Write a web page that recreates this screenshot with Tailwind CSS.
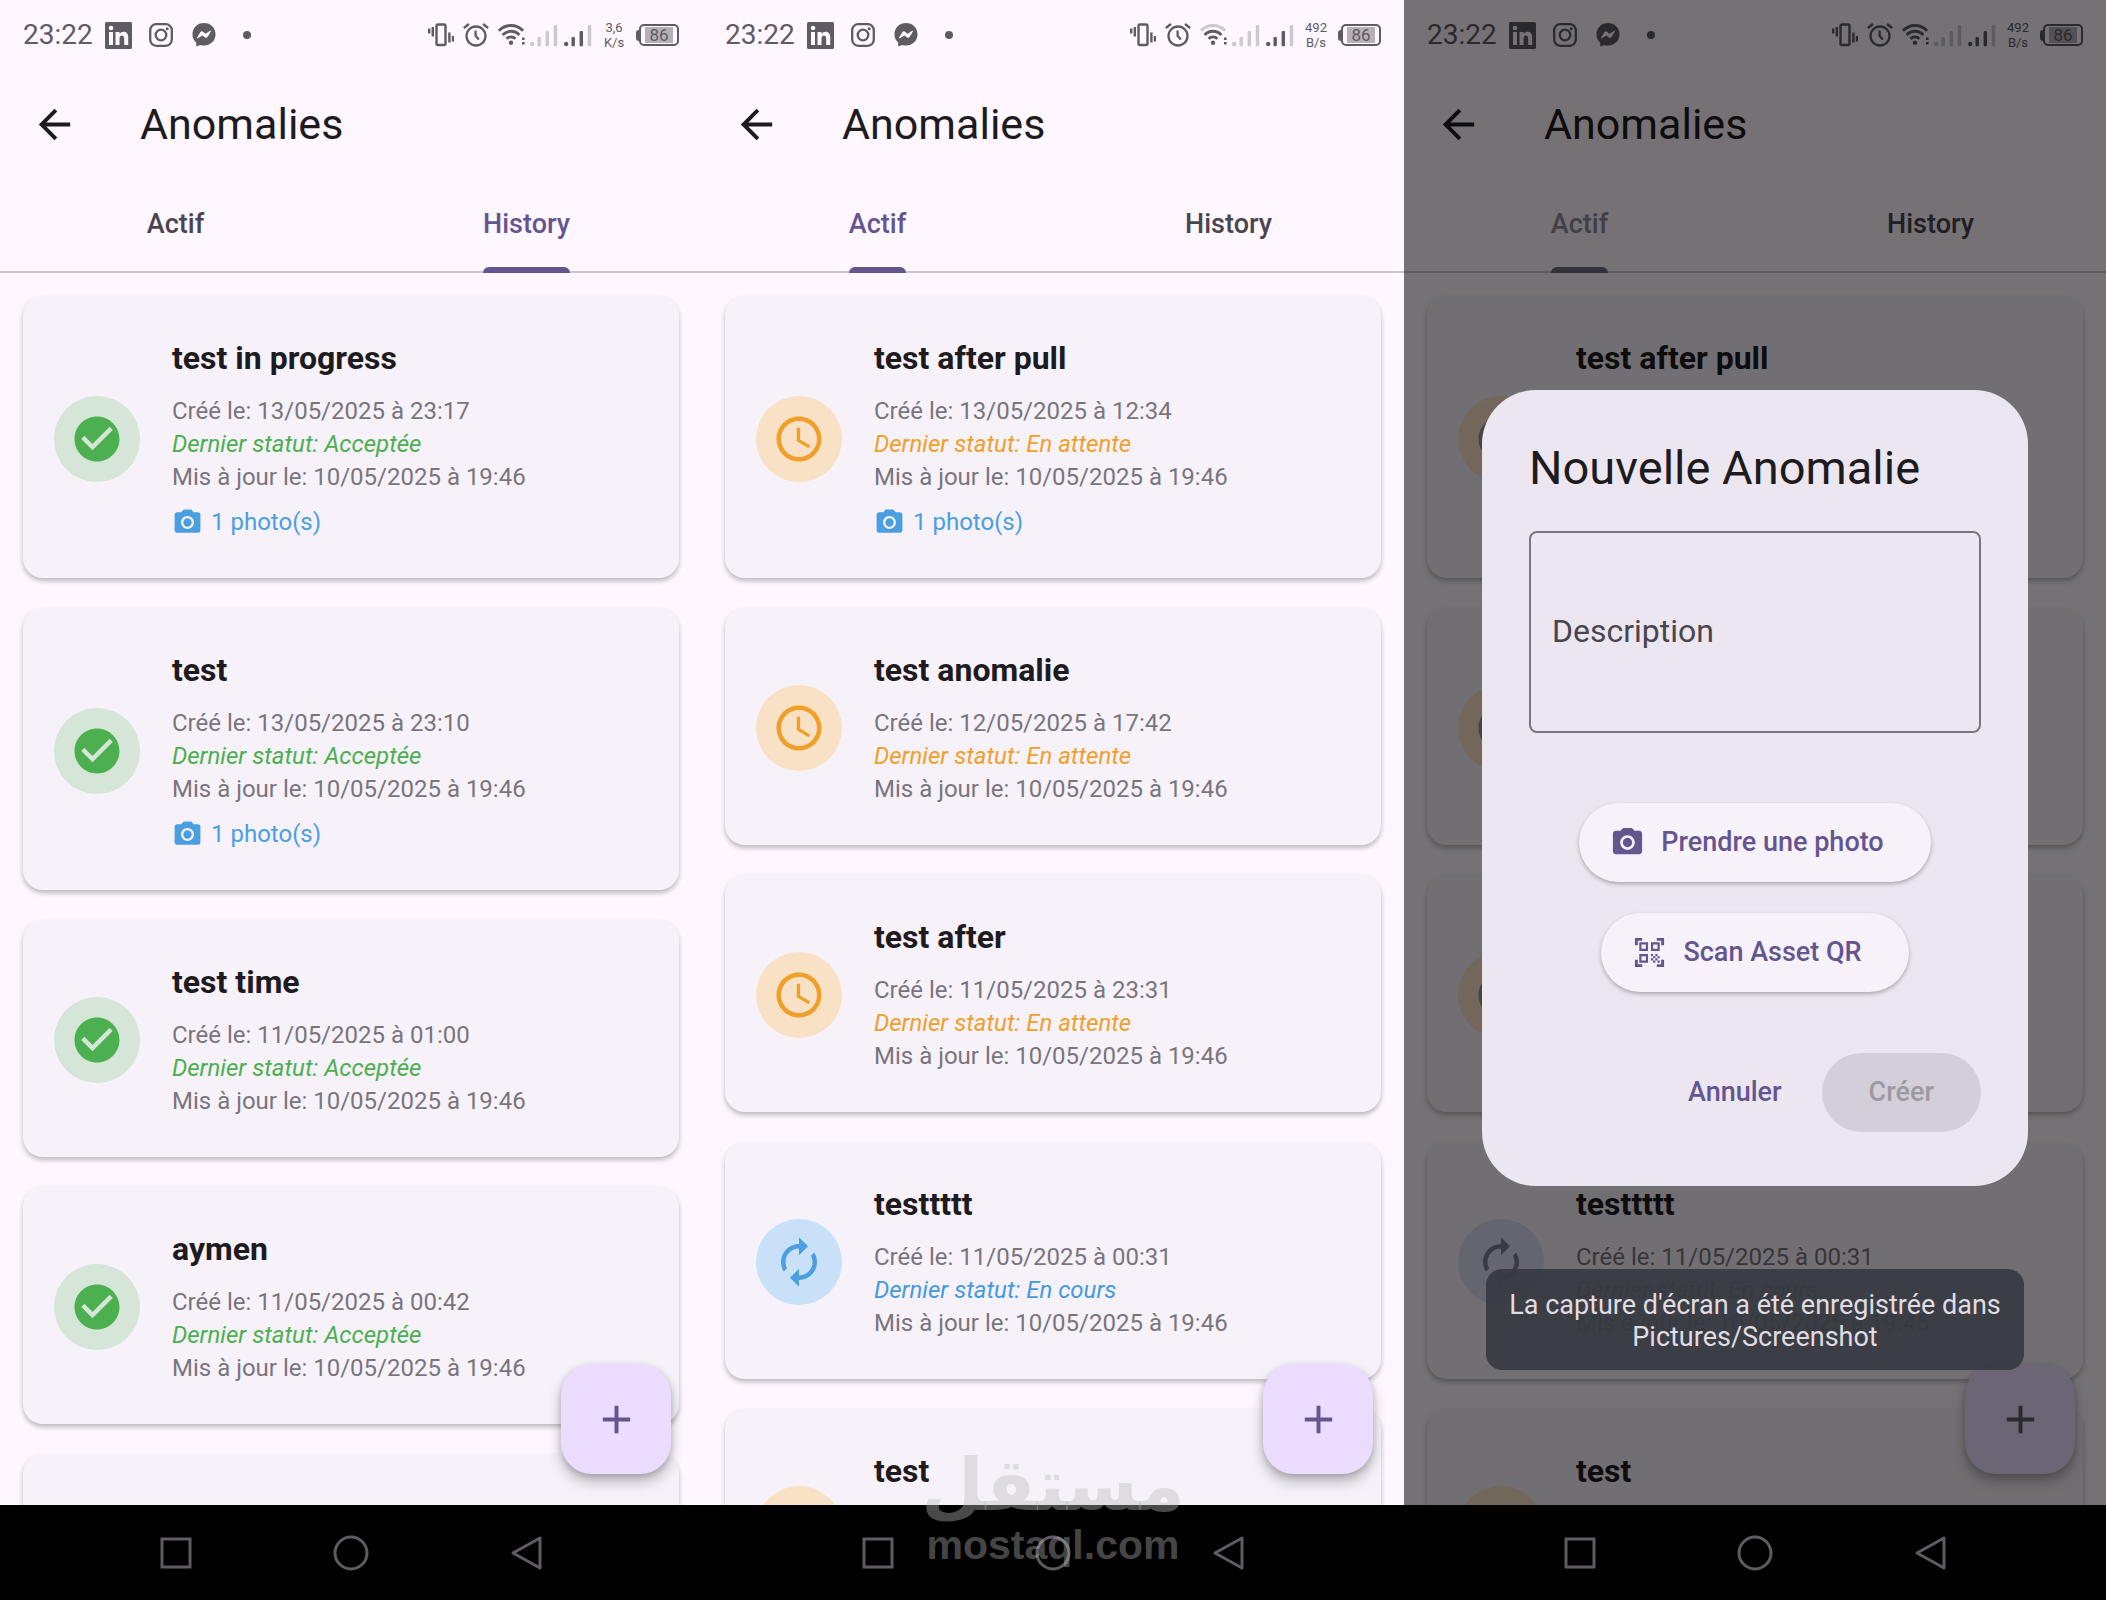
<!DOCTYPE html>
<html lang="fr">
<head>
<meta charset="utf-8">
<meta name="viewport" content="width=device-width, initial-scale=1">
<title>Anomalies</title>
<script src="https://cdn.jsdelivr.net/npm/@tailwindcss/browser@4"></script>
</head>
<body class="bg-black font-['Roboto','Noto_Sans',sans-serif] text-[#1d1b20]">

<svg class="hidden" aria-hidden="true">
  <symbol id="i-linkedin" viewBox="0 0 27 27"><path fill="currentColor" fill-rule="evenodd" d="M1.5 0h24A1.5 1.5 0 0 1 27 1.500v24a1.500 1.500 0 0 1-1.500 1.500h-24A1.500 1.500 0 0 1 0 25.500v-24A1.500 1.500 0 0 1 1.500 0zM4 10v13h4V10zM6 3.700a2.300 2.300 0 1 0 0 4.600 2.300 2.300 0 0 0 0-4.600zM10.500 10v13h4v-6.500c0-3.900 4.700-4.100 4.700 0V23h4v-8c0-6.600-6.500-6.300-8.700-3.200V10z"/></symbol>
  <symbol id="i-instagram" viewBox="0 0 24 24"><g fill="none" stroke="currentColor" stroke-width="2.300"><rect x="1.200" y="1.200" width="21.600" height="21.600" rx="6"/><circle cx="12" cy="12" r="5.300"/></g><circle cx="18.200" cy="5.800" r="1.500" fill="currentColor"/></symbol>
  <symbol id="i-messenger" viewBox="0 0 24 25"><path fill="currentColor" fill-rule="evenodd" d="M12 0C5.200 0 0 5 0 11.700c0 3.500 1.400 6.500 3.800 8.600L4 24.500l4-1.700c1.200.4 2.600.6 4 .6 6.800 0 12-5 12-11.700S18.800 0 12 0zM4.800 15.100l3.500-5.600c.6-.9 1.800-1.100 2.600-.5l2.800 2.100 4.700-3c.5-.4 1.200.2.800.8l-3.500 5.600c-.6.900-1.800 1.100-2.600.5l-2.800-2.100-4.700 3c-.5.400-1.200-.2-.8-.8z"/></symbol>
  <symbol id="i-vibrate" viewBox="0 0 26 24"><g fill="none" stroke="currentColor" stroke-width="2.400"><rect x="8.500" y="1.500" width="9" height="20.500" rx="1.500"/><path d="M1.200 5.500v5M4.800 4v9.500M21.400 9.500v10M25 13v5.500"/></g></symbol>
  <symbol id="i-alarm" viewBox="0 0 26 24"><g fill="none" stroke="currentColor" stroke-width="2.300"><circle cx="13" cy="13" r="9.500"/><path d="M.8 5 6 1M20 1l5.200 4M12.600 7.500v5.300l3.200 3.700"/></g></symbol>
  <symbol id="i-wifi" viewBox="0 0 28 24"><g fill="none" stroke="currentColor" stroke-width="2.800"><path d="M.9 7.800C7.500.7 18.500.7 25.100 7.800"/><path d="M4.600 12c4.800-5 12-5 16.800 0M8.500 15.800c2.700-2.500 6.300-2.500 9 0"/></g><circle cx="13" cy="19.700" r="2.200" fill="currentColor"/><path fill="currentColor" d="M24 14.500h2.600v2.600H24zM24 19h2.600v2.600H24z"/></symbol>
  <symbol id="i-wifi-low" viewBox="0 0 28 24"><g fill="none" stroke="currentColor" stroke-width="2.800"><path opacity=".3" d="M.9 7.800C7.500.7 18.500.7 25.100 7.800"/><path d="M4.600 12c4.800-5 12-5 16.800 0M8.500 15.800c2.700-2.500 6.300-2.500 9 0"/></g><circle cx="13" cy="19.700" r="2.200" fill="currentColor"/><path fill="currentColor" d="M24 14.500h2.600v2.600H24zM24 19h2.600v2.600H24z"/></symbol>
  <symbol id="i-signal-none" viewBox="0 0 28 24"><g fill="currentColor" opacity=".3"><circle cx="2.200" cy="21" r="2.200"/><rect x="7.500" y="14" width="3.400" height="9.200" rx="1"/><rect x="15.600" y="8" width="3.400" height="15.200" rx="1"/><rect x="23.800" y="2" width="3.400" height="21.200" rx="1"/></g></symbol>
  <symbol id="i-signal" viewBox="0 0 28 24"><g fill="currentColor"><circle cx="2.200" cy="21" r="2.200"/><rect x="7.500" y="14" width="3.400" height="9.200" rx="1"/><rect x="15.600" y="8" width="3.400" height="15.200" rx="1"/><rect x="23.800" y="2" width="3.400" height="21.200" rx="1" opacity=".3"/></g></symbol>
  <symbol id="i-back" viewBox="0 0 24 24"><path fill="currentColor" d="M20 11H7.830l5.590-5.590L12 4l-8 8 8 8 1.410-1.410L7.830 13H20v-2z"/></symbol>
  <symbol id="i-check" viewBox="0 0 24 24"><path fill="currentColor" d="M12 2C6.480 2 2 6.480 2 12s4.480 10 10 10 10-4.480 10-10S17.520 2 12 2zm-2 15-5-5 1.410-1.410L10 14.170l7.590-7.590L19 8l-9 9z"/></symbol>
  <symbol id="i-clock" viewBox="0 0 24 24"><path fill="currentColor" d="M11.990 2C6.470 2 2 6.480 2 12s4.470 10 9.990 10C17.520 22 22 17.520 22 12S17.520 2 11.990 2zM12 20c-4.420 0-8-3.580-8-8s3.580-8 8-8 8 3.580 8 8-3.580 8-8 8zm.5-13H11v6l5.250 3.150.75-1.230-4.500-2.670z"/></symbol>
  <symbol id="i-renew" viewBox="0 0 24 24"><path fill="currentColor" d="M12 6v3l4-4-4-4v3c-4.420 0-8 3.580-8 8 0 1.570.46 3.030 1.240 4.260L6.700 14.800c-.45-.83-.7-1.790-.7-2.800 0-3.310 2.690-6 6-6zm6.760 1.740L17.300 9.200c.44.84.7 1.790.7 2.800 0 3.310-2.690 6-6 6v-3l-4 4 4 4v-3c4.420 0 8-3.580 8-8 0-1.570-.46-3.030-1.240-4.260z"/></symbol>
  <symbol id="i-camera" viewBox="0 0 24 24"><circle cx="12" cy="12" r="3.200" fill="currentColor"/><path fill="currentColor" d="M9 2 7.170 4H4c-1.100 0-2 .9-2 2v12c0 1.100.9 2 2 2h16c1.100 0 2-.9 2-2V6c0-1.100-.9-2-2-2h-3.170L15 2H9zm3 15c-2.760 0-5-2.240-5-5s2.240-5 5-5 5 2.240 5 5-2.240 5-5 5z"/></symbol>
  <symbol id="i-qr" viewBox="0 0 24 24"><path fill="currentColor" d="M9.500 6.500v3h-3v-3h3M11 5H5v6h6V5zm-1.500 9.500v3h-3v-3h3M11 13H5v6h6v-6zm6.500-6.500v3h-3v-3h3M19 5h-6v6h6V5zm-6 8h1.500v1.500H13V13zm1.500 1.500H16V16h-1.500v-1.500zM16 13h1.500v1.500H16V13zm-3 3h1.500v1.500H13V16zm1.500 1.500H16V19h-1.500v-1.500zM16 16h1.500v1.500H16V16zm1.500-1.500H19V16h-1.500v-1.500zm0 3H19V19h-1.500v-1.500zM22 7h-2V4h-3V2h5v5zm0 15v-5h-2v3h-3v2h5zM2 22h5v-2H4v-3H2v5zM2 2v5h2V4h3V2H2z"/></symbol>
  <symbol id="i-plus" viewBox="0 0 24 24"><path fill="currentColor" d="M19 13h-6v6h-2v-6H5v-2h6V5h2v6h6v2z"/></symbol>
</svg>

<div class="relative h-screen">
  <main id="screens" class="grid h-full grid-cols-3"></main>
  <div class="pointer-events-none absolute bottom-[31px] left-1/2 flex -translate-x-1/2 flex-col items-center font-bold text-[#b9b9bc]/40">
    <span lang="ar" dir="rtl" class="font-['DejaVu_Sans',sans-serif] text-[72px] leading-[72px]">مستقل</span>
    <span class="font-['Liberation_Sans',sans-serif] text-[41px] leading-[48px]">mostaql.com</span>
  </div>
</div>

<script>
const icon = (name, cls) => `<svg class="${cls}" aria-hidden="true"><use href="#i-${name}"/></svg>`;

const states = {
  done:          { label: 'Acceptée',   icon: 'check', text: 'text-[#4caf50]', badge: 'bg-[#d5e5d8] text-[#4caf50]' },
  waiting:       { label: 'En attente', icon: 'clock', text: 'text-[#f0a02a]', badge: 'bg-[#f9e1c5] text-[#f0a02a]' },
  running:       { label: 'En cours',   icon: 'renew', text: 'text-[#449ae0]', badge: 'bg-[#c9e1f8] text-[#4a9fe0]' },
  waitingDimmed: { label: 'En attente', icon: 'clock', text: 'text-[#f0a02a]', badge: 'bg-[#f9e1c5] text-[#94969f]' },
  runningDimmed: { label: 'En cours',   icon: 'renew', text: 'text-[#79757d]', badge: 'bg-[#dadcf0] text-[#7e7f8c]' },
};

const card = ([title, created, state, photo]) => {
  const s = states[state];
  return `<li class="flex shrink-0 items-center gap-8 rounded-[20px] bg-[#f7f2fa] pt-[42px] pr-8 pb-[39px] pl-[31px] shadow-[0_3px_5px_rgba(0,0,0,0.26)]">
    <span class="flex size-[86px] shrink-0 items-center justify-center rounded-full ${s.badge}">${icon(s.icon, 'size-[54px]')}</span>
    <div class="text-[24px] leading-[33px] whitespace-nowrap text-[#79757d]">
      <h2 class="mb-[17px] text-[32px] leading-10 font-bold text-[#1d1b20]">${title}</h2>
      <p>Créé le: ${created}</p>
      <p class="italic ${s.text}">Dernier statut: ${s.label}</p>
      <p>Mis à jour le: 10/05/2025 à 19:46</p>
      ${photo ? `<p class="mt-3 flex items-center gap-2 text-[#4a9fe0]">${icon('camera', 'size-[31px]')}1 photo(s)</p>` : ''}
    </div>
  </li>`;
};

const tab = (label, active, dim) => `<button type="button" role="tab" aria-selected="${active}" class="flex justify-center text-[27px] font-medium ${active ? (dim ? 'text-[#8e899e]' : 'text-[#65558f]') : 'text-[#49454f]'}">
    <span class="relative flex h-full items-center">${label}${active ? `<i class="absolute inset-x-0 -bottom-[2px] h-[6px] rounded-t-[6px] ${dim ? 'bg-[#716c80]' : 'bg-[#65558f]'}"></i>` : ''}</span>
  </button>`;

const dialog = `<div class="absolute inset-0 bg-black/54"></div>
  <form role="dialog" aria-labelledby="dlg-title" class="absolute inset-x-[78px] top-[390px] flex flex-col rounded-[54px] bg-[#ece6f0] px-[47px] pt-[47px] pb-[54px]">
    <h2 id="dlg-title" class="text-[47px] leading-[62px]">Nouvelle Anomalie</h2>
    <textarea aria-label="Description" placeholder="Description" class="mt-8 block h-[202px] w-full resize-none rounded-lg border-2 border-[#79747e] bg-transparent px-[21px] pt-[77px] text-[32px] leading-[42px] placeholder:text-[#49454f]"></textarea>
    <div class="mt-[70px] flex flex-col items-center gap-[31px] text-[27px] leading-[35px] font-medium text-[#65558f]">
      <button type="button" class="flex items-center gap-4 rounded-full bg-[#f7f2fa] py-[22px] pr-[47px] pl-[31px] shadow-[0_2px_4px_rgba(0,0,0,0.28)]">${icon('camera', 'size-[35px]')}Prendre une photo</button>
      <button type="button" class="flex items-center gap-4 rounded-full bg-[#f7f2fa] py-[22px] pr-[47px] pl-[31px] shadow-[0_2px_4px_rgba(0,0,0,0.28)]">${icon('qr', 'size-[35px]')}Scan Asset QR</button>
    </div>
    <div class="mt-[61px] flex justify-end gap-4 text-[27px] leading-[35px] font-medium">
      <button type="button" class="px-6 py-[22px] text-[#65558f]">Annuler</button>
      <button type="submit" disabled class="rounded-full bg-[#d3ced7] px-[47px] py-[22px] text-[#9d99a1]">Créer</button>
    </div>
  </form>
  <p role="status" class="absolute inset-x-[82px] bottom-[135px] rounded-2xl bg-[#373a41]/93 px-4 pt-5 pb-[17px] text-center text-[27px] leading-8 text-[#e0dce2]">La capture d'écran a été enregistrée dans Pictures/Screenshot</p>`;

const screen = ({ rate, unit, wifi, active, items, modal }) => `<section class="flex h-full min-h-0 min-w-0 flex-col">
  <div class="relative flex min-h-0 flex-1 flex-col overflow-hidden bg-[#fef7ff]">
    <div class="flex h-[70px] shrink-0 items-center justify-between px-[23px] text-[#5f5b62]">
      <div class="flex items-center">
        <span class="text-[28px] leading-8">23:22</span>
        ${icon('linkedin', 'ml-3 size-[27px]')}
        ${icon('instagram', 'ml-[17px] size-6')}
        ${icon('messenger', 'ml-[19px] size-6')}
        <i class="ml-[27px] size-2 rounded-full bg-current"></i>
      </div>
      <div class="flex items-center">
        ${icon('vibrate', 'h-6 w-[26px]')}
        ${icon('alarm', 'ml-[9px] h-6 w-[26px]')}
        ${icon(wifi, 'ml-[9px] h-6 w-7')}
        ${icon('signal-none', 'ml-1 h-6 w-7')}
        ${icon('signal', 'ml-[6px] h-6 w-7')}
        <span class="ml-[10px] w-6 text-center text-[13px] leading-[15px]">${rate}<br>${unit}</span>
        <span class="ml-[10px] flex items-center">
          <i class="h-[11px] w-[3px] rounded-l-sm bg-current"></i>
          <span class="flex h-[22px] w-10 items-center justify-center rounded-[5px] border-2 border-current"><span class="w-7 bg-[#5f5b62]/45 text-center text-[17px] leading-4">86</span></span>
        </span>
      </div>
    </div>
    <header class="flex h-[108px] shrink-0 items-center gap-[62px] pl-[31px]">
      <button type="button" aria-label="Retour">${icon('back', 'size-[47px]')}</button>
      <h1 class="text-[43px] leading-[52px]">Anomalies</h1>
    </header>
    <div role="tablist" class="grid h-[95px] shrink-0 grid-cols-2 border-b-2 border-[#cac4d0]">${tab('Actif', active === 'Actif', modal)}${tab('History', active === 'History', modal)}</div>
    <ul class="flex min-h-0 flex-1 flex-col gap-[30px] overflow-hidden px-[23px] pt-[23px]">${items.map(card).join('')}</ul>
    <button type="button" aria-label="Ajouter" class="absolute right-[31px] bottom-[31px] flex size-[110px] items-center justify-center rounded-[31px] bg-[#eaddff] ${modal ? 'text-[#5f5a66]' : 'text-[#65558f]'} shadow-[0_8px_14px_rgba(0,0,0,0.25),0_2px_6px_rgba(0,0,0,0.15)]">${icon('plus', 'size-[47px]')}</button>
    ${modal ? dialog : ''}
  </div>
  <nav class="flex h-[95px] shrink-0 items-center bg-black px-[12.5%] text-[#5f5b60]">
    <button type="button" aria-label="Applications récentes" class="flex flex-1 justify-center"><svg class="size-9" viewBox="0 0 36 36" fill="none" stroke="currentColor" stroke-width="3"><rect x="4" y="4" width="28" height="28"/></svg></button>
    <button type="button" aria-label="Accueil" class="flex flex-1 justify-center"><svg class="size-9" viewBox="0 0 36 36" fill="none" stroke="currentColor" stroke-width="3"><circle cx="18" cy="18" r="16"/></svg></button>
    <button type="button" aria-label="Précédent" class="flex flex-1 justify-center"><svg class="size-9" viewBox="0 0 36 36" fill="none" stroke="currentColor" stroke-width="3" stroke-linejoin="round"><path d="M31 3v30L4 18z"/></svg></button>
  </nav>
</section>`;

const history = [
  ['test in progress', '13/05/2025 à 23:17', 'done', true],
  ['test', '13/05/2025 à 23:10', 'done', true],
  ['test time', '11/05/2025 à 01:00', 'done', false],
  ['aymen', '11/05/2025 à 00:42', 'done', false],
  ['aymen', '10/05/2025 à 22:10', 'done', false],
];
const open = (waiting, running) => [
  ['test after pull', '13/05/2025 à 12:34', waiting, true],
  ['test anomalie', '12/05/2025 à 17:42', waiting, false],
  ['test after', '11/05/2025 à 23:31', waiting, false],
  ['testtttt', '11/05/2025 à 00:31', running, false],
  ['test', '10/05/2025 à 20:15', waiting, false],
];

document.getElementById('screens').innerHTML = [
  { rate: '3,6', unit: 'K/s', wifi: 'wifi', active: 'History', items: history, modal: false },
  { rate: '492', unit: 'B/s', wifi: 'wifi-low', active: 'Actif', items: open('waiting', 'running'), modal: false },
  { rate: '492', unit: 'B/s', wifi: 'wifi', active: 'Actif', items: open('waitingDimmed', 'runningDimmed'), modal: true },
].map(screen).join('');
</script>
</body>
</html>
